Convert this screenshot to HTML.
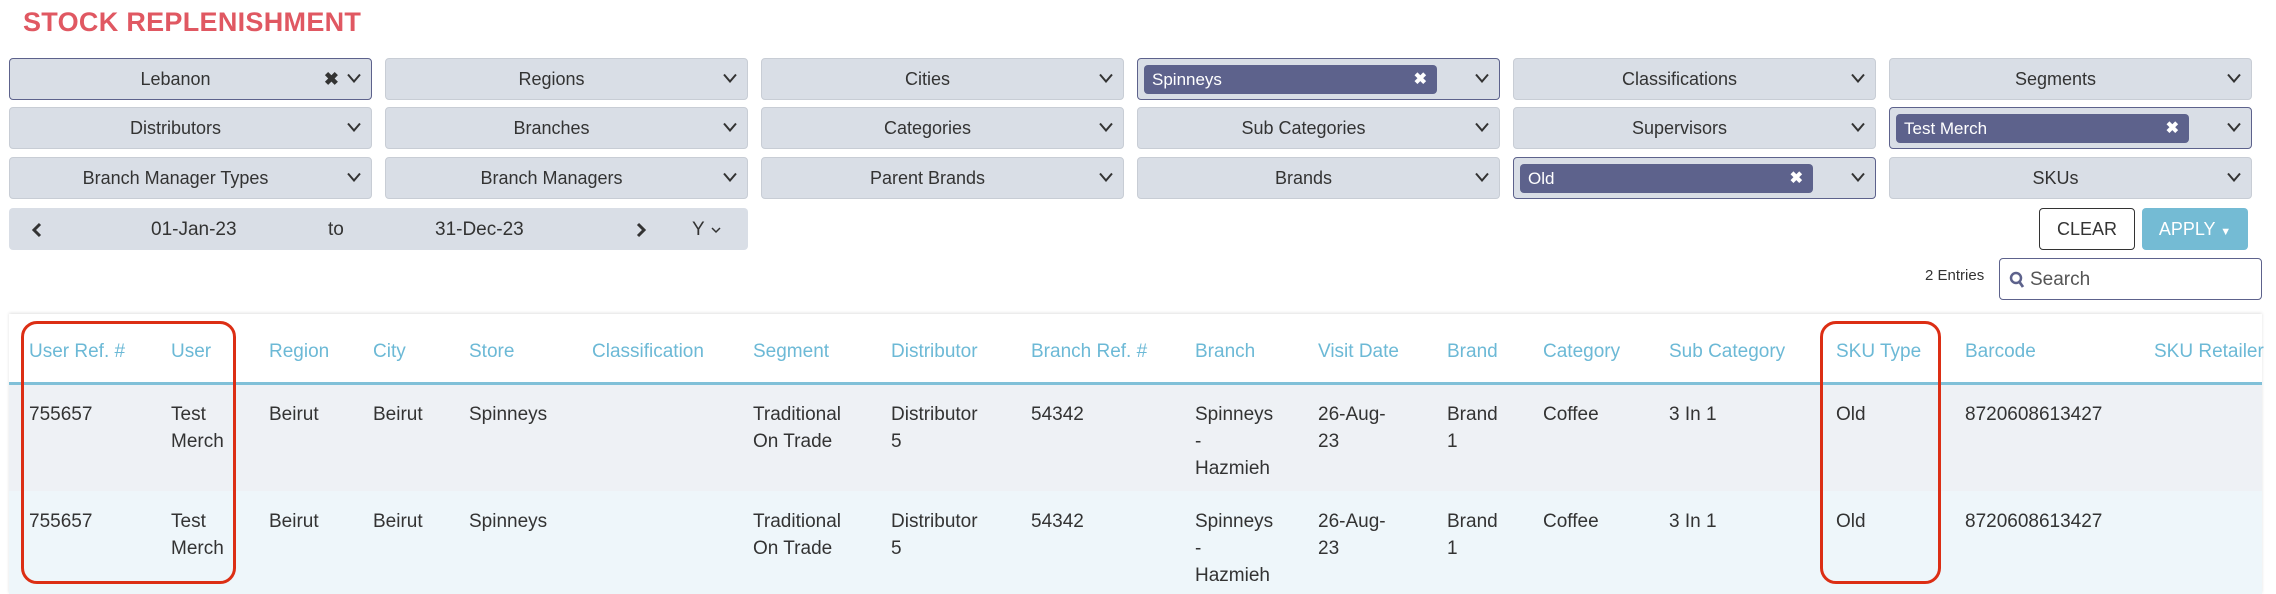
<!DOCTYPE html>
<html><head><meta charset="utf-8"><style>
*{box-sizing:border-box;margin:0;padding:0}
body{width:2276px;height:594px;background:#fff;font-family:"Liberation Sans",sans-serif;color:#333;position:relative;overflow:hidden}
.a{position:absolute}
h1{position:absolute;left:23px;top:7px;font-size:27px;font-weight:bold;color:#e05862;letter-spacing:0.3px}
.dd{position:absolute;height:42px;width:363px;background:#d9dee6;border:1px solid #c8cdd5;border-radius:4px;font-size:18px;line-height:40px;text-align:center;padding-right:30px}
.dd.sel{border-color:#5d628c}
.chev{position:absolute;right:10px;top:14px;width:14px;height:10px}
.chip{position:absolute;left:6px;top:6px;height:29px;width:293px;background:#5d628c;border-radius:4px;color:#fff;text-align:left;padding-left:8px;line-height:29px;font-size:17px}
.chip b{position:absolute;right:10px;top:0;font-size:16px}
.th{position:absolute;top:341px;font-size:19px;color:#6cb9d6}
.td{position:absolute;font-size:19px;line-height:27px;color:#333}
</style></head><body>
<h1>STOCK REPLENISHMENT</h1>

<div class="dd sel" style="left:9px;top:58px">Lebanon<span class="a" style="right:32px;top:0;font-weight:bold;font-size:18px">✖</span><svg class="chev" viewBox="0 0 14 10"><path d="M1 1.5L7 8.5L13 1.5" fill="none" stroke="#333" stroke-width="2"/></svg></div>
<div class="dd" style="left:385px;top:58px">Regions<svg class="chev" viewBox="0 0 14 10"><path d="M1 1.5L7 8.5L13 1.5" fill="none" stroke="#333" stroke-width="2"/></svg></div>
<div class="dd" style="left:761px;top:58px">Cities<svg class="chev" viewBox="0 0 14 10"><path d="M1 1.5L7 8.5L13 1.5" fill="none" stroke="#333" stroke-width="2"/></svg></div>
<div class="dd sel" style="left:1137px;top:58px"><div class="chip">Spinneys<b>✖</b></div><svg class="chev" viewBox="0 0 14 10"><path d="M1 1.5L7 8.5L13 1.5" fill="none" stroke="#333" stroke-width="2"/></svg></div>
<div class="dd" style="left:1513px;top:58px">Classifications<svg class="chev" viewBox="0 0 14 10"><path d="M1 1.5L7 8.5L13 1.5" fill="none" stroke="#333" stroke-width="2"/></svg></div>
<div class="dd" style="left:1889px;top:58px">Segments<svg class="chev" viewBox="0 0 14 10"><path d="M1 1.5L7 8.5L13 1.5" fill="none" stroke="#333" stroke-width="2"/></svg></div>
<div class="dd" style="left:9px;top:107px">Distributors<svg class="chev" viewBox="0 0 14 10"><path d="M1 1.5L7 8.5L13 1.5" fill="none" stroke="#333" stroke-width="2"/></svg></div>
<div class="dd" style="left:385px;top:107px">Branches<svg class="chev" viewBox="0 0 14 10"><path d="M1 1.5L7 8.5L13 1.5" fill="none" stroke="#333" stroke-width="2"/></svg></div>
<div class="dd" style="left:761px;top:107px">Categories<svg class="chev" viewBox="0 0 14 10"><path d="M1 1.5L7 8.5L13 1.5" fill="none" stroke="#333" stroke-width="2"/></svg></div>
<div class="dd" style="left:1137px;top:107px">Sub Categories<svg class="chev" viewBox="0 0 14 10"><path d="M1 1.5L7 8.5L13 1.5" fill="none" stroke="#333" stroke-width="2"/></svg></div>
<div class="dd" style="left:1513px;top:107px">Supervisors<svg class="chev" viewBox="0 0 14 10"><path d="M1 1.5L7 8.5L13 1.5" fill="none" stroke="#333" stroke-width="2"/></svg></div>
<div class="dd sel" style="left:1889px;top:107px"><div class="chip">Test Merch<b>✖</b></div><svg class="chev" viewBox="0 0 14 10"><path d="M1 1.5L7 8.5L13 1.5" fill="none" stroke="#333" stroke-width="2"/></svg></div>
<div class="dd" style="left:9px;top:157px">Branch Manager Types<svg class="chev" viewBox="0 0 14 10"><path d="M1 1.5L7 8.5L13 1.5" fill="none" stroke="#333" stroke-width="2"/></svg></div>
<div class="dd" style="left:385px;top:157px">Branch Managers<svg class="chev" viewBox="0 0 14 10"><path d="M1 1.5L7 8.5L13 1.5" fill="none" stroke="#333" stroke-width="2"/></svg></div>
<div class="dd" style="left:761px;top:157px">Parent Brands<svg class="chev" viewBox="0 0 14 10"><path d="M1 1.5L7 8.5L13 1.5" fill="none" stroke="#333" stroke-width="2"/></svg></div>
<div class="dd" style="left:1137px;top:157px">Brands<svg class="chev" viewBox="0 0 14 10"><path d="M1 1.5L7 8.5L13 1.5" fill="none" stroke="#333" stroke-width="2"/></svg></div>
<div class="dd sel" style="left:1513px;top:157px"><div class="chip">Old<b>✖</b></div><svg class="chev" viewBox="0 0 14 10"><path d="M1 1.5L7 8.5L13 1.5" fill="none" stroke="#333" stroke-width="2"/></svg></div>
<div class="dd" style="left:1889px;top:157px">SKUs<svg class="chev" viewBox="0 0 14 10"><path d="M1 1.5L7 8.5L13 1.5" fill="none" stroke="#333" stroke-width="2"/></svg></div>

<div class="a" style="left:9px;top:208px;width:739px;height:42px;background:#d9dee6;border-radius:4px;font-size:19px;line-height:44px">
<svg class="a" style="left:22px;top:14px" width="12" height="16" viewBox="0 0 12 16"><path d="M9 2L3 8L9 14" fill="none" stroke="#333" stroke-width="3"/></svg>
<span class="a" style="left:142px">01-Jan-23</span>
<span class="a" style="left:319px">to</span>
<span class="a" style="left:426px">31-Dec-23</span>
<svg class="a" style="left:626px;top:14px" width="12" height="16" viewBox="0 0 12 16"><path d="M3 2L9 8L3 14" fill="none" stroke="#333" stroke-width="3"/></svg>
<span class="a" style="left:683px">Y</span>
<svg class="a" style="left:702px;top:19px" width="10" height="7" viewBox="0 0 10 7"><path d="M1 1L5 5L9 1" fill="none" stroke="#333" stroke-width="1.5"/></svg>
</div>

<div class="a" style="left:2039px;top:208px;width:96px;height:42px;border:1px solid #333;border-radius:4px;font-size:18px;line-height:40px;text-align:center">CLEAR</div>
<div class="a" style="left:2142px;top:208px;width:106px;height:42px;background:#74bbd4;border-radius:4px;font-size:18px;line-height:42px;text-align:center;color:#fff">APPLY <span style="font-size:11px">▼</span></div>

<div class="a" style="left:1925px;top:267px;font-size:15px">2 Entries</div>
<div class="a" style="left:1999px;top:258px;width:263px;height:42px;border:1px solid #5d628c;border-radius:4px;font-size:19px;line-height:42px;padding-left:30px;color:#555">Search
<svg class="a" style="left:9px;top:12px" width="16" height="18" viewBox="0 0 16 18"><circle cx="7" cy="7" r="5" fill="none" stroke="#5d628c" stroke-width="2.5"/><path d="M10.5 11L14 16" stroke="#5d628c" stroke-width="2.8"/></svg></div>

<div class="a" style="left:9px;top:314px;width:2253px;height:280px;background:#fff;box-shadow:0 -1px 3px rgba(0,0,0,0.12)"></div>
<div class="a" style="left:9px;top:382px;width:2253px;height:3px;background:#80c0d8"></div>
<div class="a" style="left:9px;top:385px;width:2253px;height:106px;background:#eef1f5"></div>
<div class="a" style="left:9px;top:491px;width:2253px;height:103px;background:#eef6fa"></div>

<div class="th" style="left:29px">User Ref. #</div>
<div class="th" style="left:171px">User</div>
<div class="th" style="left:269px">Region</div>
<div class="th" style="left:373px">City</div>
<div class="th" style="left:469px">Store</div>
<div class="th" style="left:592px">Classification</div>
<div class="th" style="left:753px">Segment</div>
<div class="th" style="left:891px">Distributor</div>
<div class="th" style="left:1031px">Branch Ref. #</div>
<div class="th" style="left:1195px">Branch</div>
<div class="th" style="left:1318px">Visit Date</div>
<div class="th" style="left:1447px">Brand</div>
<div class="th" style="left:1543px">Category</div>
<div class="th" style="left:1669px">Sub Category</div>
<div class="th" style="left:1836px">SKU Type</div>
<div class="th" style="left:1965px">Barcode</div>
<div class="th" style="left:2154px;white-space:nowrap">SKU Retailer</div>

<div class="td" style="left:29px;top:401px">755657</div>
<div class="td" style="left:171px;top:401px">Test<br>Merch</div>
<div class="td" style="left:269px;top:401px">Beirut</div>
<div class="td" style="left:373px;top:401px">Beirut</div>
<div class="td" style="left:469px;top:401px">Spinneys</div>
<div class="td" style="left:753px;top:401px">Traditional<br>On Trade</div>
<div class="td" style="left:891px;top:401px">Distributor<br>5</div>
<div class="td" style="left:1031px;top:401px">54342</div>
<div class="td" style="left:1195px;top:401px">Spinneys<br>-<br>Hazmieh</div>
<div class="td" style="left:1318px;top:401px">26-Aug-<br>23</div>
<div class="td" style="left:1447px;top:401px">Brand<br>1</div>
<div class="td" style="left:1543px;top:401px">Coffee</div>
<div class="td" style="left:1669px;top:401px">3 In 1</div>
<div class="td" style="left:1836px;top:401px">Old</div>
<div class="td" style="left:1965px;top:401px">8720608613427</div>

<div class="td" style="left:29px;top:508px">755657</div>
<div class="td" style="left:171px;top:508px">Test<br>Merch</div>
<div class="td" style="left:269px;top:508px">Beirut</div>
<div class="td" style="left:373px;top:508px">Beirut</div>
<div class="td" style="left:469px;top:508px">Spinneys</div>
<div class="td" style="left:753px;top:508px">Traditional<br>On Trade</div>
<div class="td" style="left:891px;top:508px">Distributor<br>5</div>
<div class="td" style="left:1031px;top:508px">54342</div>
<div class="td" style="left:1195px;top:508px">Spinneys<br>-<br>Hazmieh</div>
<div class="td" style="left:1318px;top:508px">26-Aug-<br>23</div>
<div class="td" style="left:1447px;top:508px">Brand<br>1</div>
<div class="td" style="left:1543px;top:508px">Coffee</div>
<div class="td" style="left:1669px;top:508px">3 In 1</div>
<div class="td" style="left:1836px;top:508px">Old</div>
<div class="td" style="left:1965px;top:508px">8720608613427</div>

<div class="a" style="left:21px;top:321px;width:215px;height:263px;border:3.5px solid #dc2e14;border-radius:16px"></div>
<div class="a" style="left:1820px;top:321px;width:121px;height:263px;border:3.5px solid #dc2e14;border-radius:16px"></div>
</body></html>
